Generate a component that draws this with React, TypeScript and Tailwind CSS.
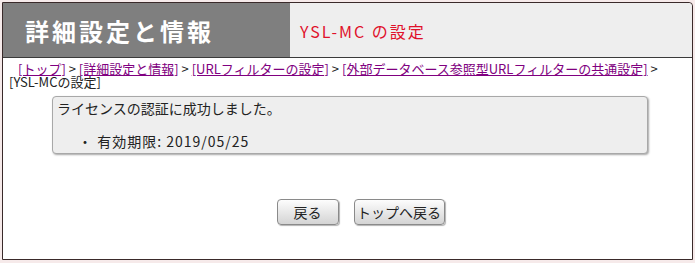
export default function App() {
  const font = { fontFamily: '"Noto Sans CJK JP", "Liberation Sans", sans-serif' };
  const link = 'inline-block leading-[13px] text-[#800080] underline';
  return (
    <div className="w-[695px] h-[263px] bg-[#f6eaea] p-[2px]" style={font}>
      <div className="h-[258px] border border-[#3a2a2a] rounded-tr-[4px] bg-white flex flex-col">
        <div className="flex h-[55px] border-b border-[#3a3a3a]">
          <div className="w-[287px] bg-[#7f7f7f] flex items-center pl-[22px] pt-[2px]">
            <span className="text-white text-[24px] font-bold tracking-[3px]">詳細設定と情報</span>
          </div>
          <div className="flex-1 bg-[#eeeeee] rounded-tr-[4px] flex items-center pl-[10px] pt-[2px]">
            <span className="text-[#e0102a] text-[16px] tracking-[2px]">YSL-MC の設定</span>
          </div>
        </div>
        <div className="pl-[6px] pt-[4px] text-[13px] leading-[13px] text-[#222]">
          <p className="pl-[9px] leading-[14px]">
            <a className={link}>[トップ]</a> &gt;{' '}
            <a className={link}>[詳細設定と情報]</a> &gt;{' '}
            <a className={link}>[URLフィルターの設定]</a> &gt;{' '}
            <a className={link}>[外部データベース参照型URLフィルターの共通設定]</a> &gt;
          </p>
          <p className="leading-[12px]">[YSL-MCの設定]</p>
        </div>
        <div className="ml-[49px] mr-[44px] mt-[8px] h-[58px] bg-[#eeeeee] border border-[#a8a8a8] rounded-[4px] shadow-[1px_1px_2px_rgba(0,0,0,0.35)] px-[4px] pt-[2px] text-[14px] text-[#222]">
          <div className="leading-[18px]">ライセンスの認証に成功しました。</div>
          <div className="leading-[18px] mt-[15px] pl-[21px] tracking-[1px]">・ 有効期限: 2019/05/25</div>
        </div>
        <div className="flex justify-center gap-[15px] mt-[45px] ml-[26px]">
          <button className="w-[62px] h-[26px] rounded-[4px] border border-[#8a8a8a] bg-gradient-to-b from-[#fdfdfd] to-[#d4d4d4] shadow-[1px_1px_1px_rgba(0,0,0,0.3)] text-[14px] text-[#222]">
            戻る
          </button>
          <button className="w-[91px] h-[26px] rounded-[4px] border border-[#8a8a8a] bg-gradient-to-b from-[#fdfdfd] to-[#d4d4d4] shadow-[1px_1px_1px_rgba(0,0,0,0.3)] text-[14px] text-[#222]">
            トップへ戻る
          </button>
        </div>
      </div>
    </div>
  );
}
